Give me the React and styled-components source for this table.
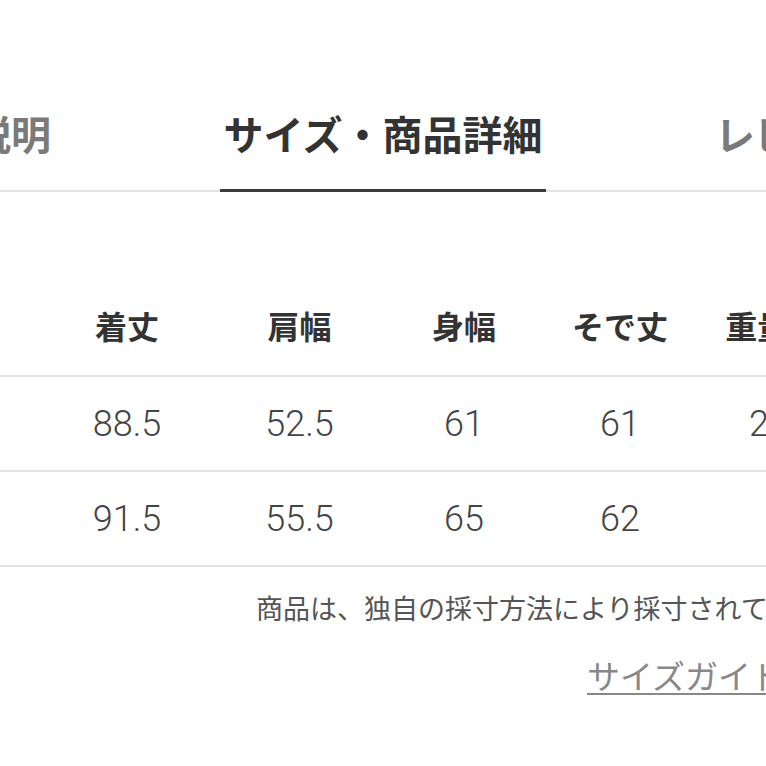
import styled, { createGlobalStyle } from "styled-components";

const GlobalStyle = createGlobalStyle`
    html, body {
        margin: 0;
        padding: 0;
        background: #fff;
    }

    body {
        font-family: "Noto Sans CJK JP", "Noto Sans", sans-serif;
        color: #333;
    }
`;

const Page = styled.div`
    width: 766px;
    height: 766px;
    overflow: hidden;
    background: #fff;
`;

const TabBar = styled.div`
    border-bottom: 2px solid #e2e2e2;
    margin-top: 113px;
`;

const TabList = styled.ul`
    display: flex;
    width: 1236px;
    margin: 0 0 0 -235px;
    padding: 0;
    list-style: none;
`;

const Tab = styled.li`
    flex: 0 0 412px;
    display: flex;
    justify-content: center;
`;

const TabLabel = styled.span`
    display: block;
    padding: 0 4px 36px;
    margin-bottom: -2px;
    font-size: 40px;
    line-height: 40px;
    font-weight: 700;
    color: ${({ $active }) => ($active ? "#333" : "#7a7a7a")};
    border-bottom: 3px solid ${({ $active }) => ($active ? "#3a3a3a" : "transparent")};
`;

const SizeTable = styled.table`
    width: 1019px;
    margin: 87px 0 0 -159px;
    border-collapse: collapse;
    table-layout: fixed;
`;

const Row = styled.tr`
    border-bottom: 2px solid #e2e2e2;
`;

const HeadCell = styled.th`
    box-sizing: border-box;
    height: 97px;
    padding: 0 0 5px;
    font-size: 32px;
    font-weight: 700;
    color: #333;
    text-align: center;
    vertical-align: middle;
    white-space: nowrap;
`;

const Cell = styled.td`
    height: 93px;
    padding: 0;
    font-family: Roboto, "Noto Sans CJK JP", sans-serif;
    font-size: 36px;
    font-weight: 300;
    color: #444;
    text-align: center;
    vertical-align: middle;
    white-space: nowrap;
`;

const Footer = styled.div`
    width: 873px;
    display: flex;
    flex-direction: column;
    align-items: flex-end;
`;

const Note = styled.p`
    margin: 26px 0 0;
    font-size: 27px;
    line-height: 30px;
    color: #555;
    white-space: nowrap;
`;

const GuideLink = styled.a`
    margin: 34px -10px 0 0;
    font-size: 33px;
    line-height: 36px;
    color: #888;
    text-decoration: underline;
    text-underline-offset: 4px;
    text-decoration-thickness: 2px;
    white-space: nowrap;
`;

const tabs = [
    { label: "商品説明" },
    { label: "サイズ・商品詳細", active: true },
    { label: "レビュー" },
];

const columns = [
    { label: "サイズ", width: 200 },
    { label: "着丈", width: 172 },
    { label: "肩幅", width: 173 },
    { label: "身幅", width: 156 },
    { label: "そで丈", width: 156 },
    { label: "重量(g)", width: 162 },
];

const rows = [
    ["M", "88.5", "52.5", "61", "61", "270"],
    ["L", "91.5", "55.5", "65", "62", ""],
];

const App = () => (
    <Page>
        <GlobalStyle />
        <TabBar>
            <TabList>
                {tabs.map((tab) => (
                    <Tab key={tab.label}>
                        <TabLabel $active={tab.active}>{tab.label}</TabLabel>
                    </Tab>
                ))}
            </TabList>
        </TabBar>
        <SizeTable>
            <colgroup>
                {columns.map((col) => (
                    <col key={col.label} style={{ width: col.width }} />
                ))}
            </colgroup>
            <thead>
                <Row>
                    {columns.map((col) => (
                        <HeadCell key={col.label}>{col.label}</HeadCell>
                    ))}
                </Row>
            </thead>
            <tbody>
                {rows.map((row) => (
                    <Row key={row[0]}>
                        {row.map((value, i) => (
                            <Cell key={i}>{value}</Cell>
                        ))}
                    </Row>
                ))}
            </tbody>
        </SizeTable>
        <Footer>
            <Note>商品は、独自の採寸方法により採寸されています。</Note>
            <GuideLink href="#">サイズガイドを見る</GuideLink>
        </Footer>
    </Page>
);

export default App;
